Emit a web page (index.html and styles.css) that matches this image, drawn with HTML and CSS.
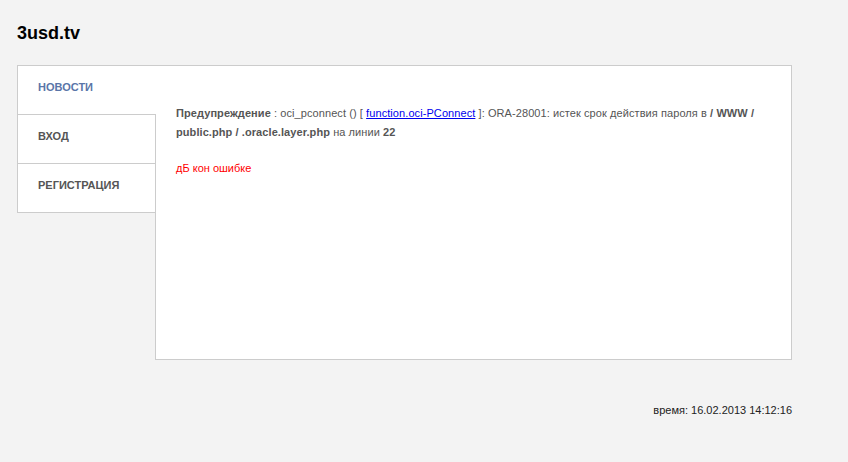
FILE: index.html
```html
<!DOCTYPE html>
<html lang="ru">
<head>
    <meta charset="UTF-8">
    <title>3usd.tv</title>
    <link rel="stylesheet" href="styles.css">
</head>
<body>
    <div class="page">
        <h1 class="logo">3usd.tv</h1>

        <div class="panel">
            <div class="tabs">
                <div class="tab active">Новости</div>
                <div class="tab">Вход</div>
                <div class="tab">Регистрация</div>
            </div>
            <div class="content">
                <p class="warning">
                    <b>Предупреждение</b> : oci_pconnect () [ <a href="#">function.oci-PConnect</a> ]: ORA-28001: истек срок действия пароля в <b>/ WWW / public.php / .oracle.layer.php</b> на линии <b>22</b>
                </p>
                <p class="error">дБ кон ошибке</p>
            </div>
        </div>

        <div class="footer">время: 16.02.2013 14:12:16</div>
    </div>
</body>
</html>
```

FILE: styles.css
```css
body {
    margin: 0;
    background: #f3f3f3;
    font-family: "Liberation Sans", Arial, sans-serif;
    font-size: 11px;
    color: #555;
}
.page {
    padding: 22px 17px 0 17px;
    width: 775px;
}
.logo {
    margin: 0 0 21px 0;
    font-size: 18px;
    line-height: 22px;
    color: #000;
}
.panel {
    display: flex;
    align-items: flex-start;
}
.tabs {
    width: 139px;
    flex: none;
    margin-right: -1px;
    position: relative;
    z-index: 1;
}
.tab {
    height: 48px;
    line-height: 43px;
    padding-left: 20px;
    background: #fff;
    border-left: 1px solid #ccc;
    border-right: 1px solid #ccc;
    border-bottom: 1px solid #ccc;
    font-weight: bold;
    text-transform: uppercase;
    color: #555;
}
.tab.active {
    border-top: 1px solid #ccc;
    border-right: none;
    color: #5a75a8;
}
.content {
    flex: 1;
    height: 293px;
    background: #fff;
    border: 1px solid #ccc;
    padding: 0 20px;
}
.warning {
    margin: 38px 0 0 0;
    line-height: 19px;
    width: 590px;
    letter-spacing: 0.08px;
}
.warning a {
    color: #0000ee;
}
.error {
    margin: 20px 0 0 0;
    color: #f00;
}
.footer {
    text-align: right;
    margin-top: 44px;
    color: #222;
}
```
